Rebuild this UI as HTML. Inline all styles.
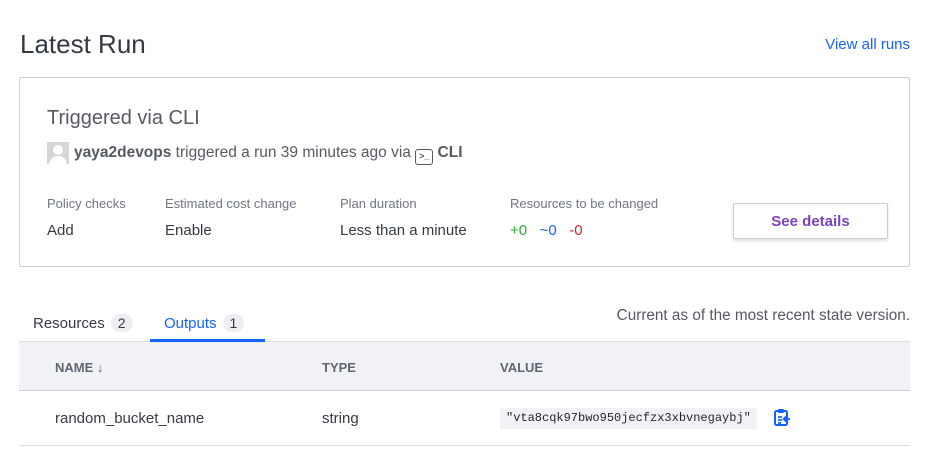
<!DOCTYPE html>
<html><head><style>
*{margin:0;padding:0;box-sizing:border-box}
body{width:927px;height:476px;background:#fff;font-family:"Liberation Sans",sans-serif;color:#343a45;position:relative;overflow:hidden}
.a{position:absolute;white-space:nowrap}
.lbl{font-size:13px;color:#6f7682}
.val{font-size:15px;color:#343a45}
.th{font-size:13px;font-weight:bold;color:#5f6573}
.badge{display:inline-block;background:#eceef1;border-radius:10px;padding:1px 7px;font-size:14px;color:#343a45;margin-left:6px}
</style></head><body>
<div class="a" style="left:20px;top:29px;font-size:26px;color:#343a45">Latest Run</div>
<div class="a" style="right:17px;top:36px;font-size:15px;color:#1563ff">View all runs</div>
<div class="a" style="left:19px;top:77px;width:891px;height:190px;border:1px solid #ccced3;border-radius:2px"></div>
<div class="a" style="left:47px;top:107px;font-size:20px;color:#555a63">Triggered via CLI</div>
<div class="a" style="left:47px;top:142px;width:22px;height:22px;background:#d6d6d6;overflow:hidden"><div style="position:absolute;left:6px;top:3px;width:10px;height:10px;border-radius:50%;background:#fff"></div><div style="position:absolute;left:2px;top:14px;width:18px;height:12px;border-radius:9px 9px 0 0;background:#fff"></div></div>
<div class="a" style="left:74px;top:144px;font-size:15.5px;color:#555a63"><b>yaya2devops</b> triggered a run 39 minutes ago via <span style="display:inline-block;width:18px;height:16px;border:1.5px solid #555a63;border-radius:3px;vertical-align:-2px;font-size:9px;line-height:12px;text-align:center;font-weight:bold">&gt;_</span> <b>CLI</b></div>
<div class="a lbl" style="left:47px;top:196px">Policy checks</div>
<div class="a lbl" style="left:165px;top:196px">Estimated cost change</div>
<div class="a lbl" style="left:340px;top:196px">Plan duration</div>
<div class="a lbl" style="left:510px;top:196px">Resources to be changed</div>
<div class="a val" style="left:47px;top:222px">Add</div>
<div class="a val" style="left:165px;top:222px">Enable</div>
<div class="a val" style="left:340px;top:222px">Less than a minute</div>
<div class="a" style="left:510px;top:222px;font-size:15px"><span style="color:#2eb039">+0</span>&nbsp;&nbsp; <span style="color:#1563ff">~0</span>&nbsp;&nbsp; <span style="color:#d2252d">-0</span></div>
<div class="a" style="left:733px;top:203px;width:155px;height:36px;border:1px solid #c8cbd1;border-radius:2px;box-shadow:0 2px 3px rgba(0,0,0,.12);text-align:center;line-height:35px;font-size:15px;font-weight:bold;color:#7b42bc">See details</div>
<div class="a" style="left:33px;top:314px;font-size:15px">Resources<span class="badge">2</span></div>
<div class="a" style="left:164px;top:314px;font-size:15px;color:#1563ff">Outputs<span class="badge">1</span></div>
<div class="a" style="right:17px;top:307px;font-size:15.3px;color:#555a63">Current as of the most recent state version.</div>
<div class="a" style="left:19px;top:341px;width:891px;height:50px;background:#f1f2f5;border-top:1px solid #dcdee2;border-bottom:1px solid #ccced3"></div>
<div class="a" style="left:150px;top:339px;width:115px;height:3px;background:#1563ff"></div>
<div class="a th" style="left:55px;top:360px">NAME <span style="font-weight:normal">↓</span></div>
<div class="a th" style="left:322px;top:360px">TYPE</div>
<div class="a th" style="left:500px;top:360px">VALUE</div>
<div class="a val" style="left:55px;top:410px">random_bucket_name</div>
<div class="a val" style="left:322px;top:410px">string</div>
<div class="a" style="left:500px;top:408px;height:21px;padding:0 6px;background:#f1f2f5;font-family:'Liberation Mono',monospace;font-size:12px;line-height:21px;color:#1f2329">"vta8cqk97bwo950jecfzx3xbvnegaybj"</div>
<svg class="a" style="left:773px;top:408px" width="19" height="19" viewBox="0 0 19 19"><rect x="2" y="3" width="12" height="14" rx="1.5" fill="none" stroke="#1563ff" stroke-width="2"/><rect x="5" y="1" width="6" height="4" rx="1" fill="#1563ff"/><path d="M5 9h4M5 12h4M5 15h3M17 11h-6M13 8.5L10.5 11 13 13.5" fill="none" stroke="#1563ff" stroke-width="1.8"/></svg>
<div class="a" style="left:19px;top:445px;width:891px;height:1px;background:#dcdee2"></div>
</body></html>
